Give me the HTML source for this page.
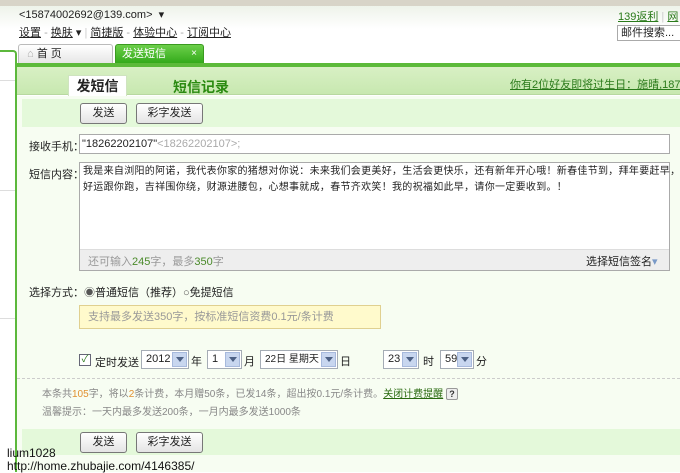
<!DOCTYPE html>
<html><head><meta charset="utf-8"><style>
*{margin:0;padding:0;box-sizing:border-box}
body{width:680px;height:472px;overflow:hidden;position:relative;background:#fff;font-family:"Liberation Sans","Noto Sans CJK SC",sans-serif;font-size:11px;color:#222}
.a{position:absolute;white-space:nowrap}
.btn{position:absolute;height:21px;border:1px solid #777;border-radius:3px;background:linear-gradient(#fff,#e4e4e4);text-align:center;line-height:19px;font-size:11px}
.sel{position:absolute;height:19px;border:1px solid #a5acb5;background:#fff;font-size:11px;line-height:17px;padding-left:4px;overflow:hidden}
.sel i{position:absolute;right:1px;top:1px;width:15px;height:15px;background:#c8d6ef;border:1px solid #a7b9dc}
.sel i:after{content:"";position:absolute;left:3px;top:4px;border:4px solid transparent;border-top:5px solid #4d6185;border-bottom:0}
.lb{position:absolute;font-size:11px}
</style></head><body>
<div class="a" style="left:0;top:0;width:680px;height:6px;background:#d8d4c8"></div>
<div class="a" style="left:0;top:6px;width:680px;height:58px;background:linear-gradient(#eef3ea,#fff 40%)"></div>
<div class="a" style="left:19px;top:8px">&lt;15874002692@139.com&gt; &nbsp;▾</div>
<div class="a" style="left:19px;top:24px"><u>设置</u> <span style="color:#aaa">-</span> <u>换肤</u> ▾ <span style="color:#ccc">|</span> <u>简捷版</u> <span style="color:#aaa">-</span> <u>体验中心</u> <span style="color:#aaa">-</span> <u>订阅中心</u></div>
<div class="a" style="left:618px;top:8px;width:62px;overflow:hidden;color:#2a7a1a"><u>139返利</u> <span style="color:#ccc">|</span> <u>网</u></div>
<div class="a" style="left:617px;top:25px;width:63px;height:16px;border:1px solid #aaa;border-right:0;background:#fff;font-size:11px;line-height:14px;padding-left:3px;overflow:hidden">邮件搜索...</div>
<div class="a" style="left:18px;top:44px;width:95px;height:20px;border:1px solid #bbb;border-bottom:0;border-radius:3px 3px 0 0;background:linear-gradient(#fff,#e5e5e5);padding-left:8px;line-height:18px"><span style="color:#aaa">⌂</span> 首 页</div>
<div class="a" style="left:115px;top:44px;width:89px;height:20px;border:1px solid #3a9a20;border-bottom:0;border-radius:3px 3px 0 0;background:linear-gradient(#6ccf4a,#30a818);color:#fff;padding-left:6px;line-height:18px">发送短信<span style="position:absolute;right:6px;font-size:10px">×</span></div>
<div class="a" style="left:0;top:50px;width:17px;height:422px;border-top:2px solid #5cb83c;border-right:2px solid #5cb83c;border-radius:0 4px 0 0;background:#fff"></div>
<div class="a" style="left:0;top:80px;width:15px;height:1px;background:#ddd"></div>
<div class="a" style="left:0;top:190px;width:15px;height:1px;background:#ddd"></div>
<div class="a" style="left:0;top:318px;width:15px;height:1px;background:#ddd"></div>
<div class="a" style="left:17px;top:63px;width:663px;height:4px;background:#5cba3a"></div>
<div class="a" style="left:17px;top:67px;width:663px;height:28px;background:linear-gradient(#d8f0c4,#c8e8b0);border-bottom:1px solid #b8d8a0"></div>
<div class="a" style="left:68px;top:75px;width:59px;height:21px;background:#fff;border:1px solid #cfe3c0;border-bottom:0;text-align:center;font-size:14px;font-weight:bold;line-height:20px">发短信</div>
<div class="a" style="left:173px;top:77px;font-size:14px;font-weight:bold;color:#2a8a10">短信记录</div>
<div class="a" style="left:510px;top:76px;width:170px;overflow:hidden;color:#2a7a1a;text-decoration:underline">你有2位好友即将过生日：施晴,18702</div>
<div class="a" style="left:17px;top:96px;width:663px;height:376px;background:#f7fdf2"></div>
<div class="a" style="left:22px;top:99px;width:658px;height:28px;background:#e4f9da"></div>
<div class="btn" style="left:80px;top:103px;width:47px">发送</div>
<div class="btn" style="left:136px;top:103px;width:67px">彩字发送</div>
<div class="lb" style="left:29px;top:138px">接收手机：</div>
<div class="a" style="left:79px;top:134px;width:591px;height:20px;border:1px solid #aaa;background:#fff;font-size:11px;line-height:18px;padding-left:2px">"18262202107"<span style="color:#aaa">&lt;18262202107&gt;;</span></div>
<div class="lb" style="left:29px;top:166px">短信内容：</div>
<div class="a" style="left:79px;top:162px;width:591px;height:109px;border:1px solid #aaa;background:#fff"></div>
<div class="a" style="left:83px;top:164px;font-size:10px;line-height:16px;letter-spacing:0.3px">我是来自浏阳的阿诺，我代表你家的猪想对你说：未来我们会更美好，生活会更快乐，还有新年开心哦！新春佳节到，拜年要赶早，<br>好运跟你跑，吉祥围你绕，财源进腰包，心想事就成，春节齐欢笑！我的祝福如此早，请你一定要收到。！</div>
<div class="a" style="left:80px;top:249px;width:589px;height:21px;background:#eee;border-top:1px solid #ddd"></div>
<div class="a" style="left:88px;top:253px;font-size:11px;color:#999">还可输入<span style="color:#4a8a2a">245</span>字，最多<span style="color:#4a8a2a">350</span>字</div>
<div class="a" style="left:586px;top:253px;font-size:11px">选择短信签名<span style="color:#7a9ac8">▾</span></div>
<div class="lb" style="left:29px;top:284px">选择方式：<span style="color:#555">◉</span>普通短信（推荐）<span style="color:#555">○</span>免提短信</div>
<div class="a" style="left:79px;top:305px;width:302px;height:24px;background:#fffacc;border:1px solid #e0d090;color:#999;font-size:11px;line-height:22px;padding-left:8px">支持最多发送350字，按标准短信资费0.1元/条计费</div>
<div class="a" style="left:79px;top:354px;width:12px;height:12px;border:1px solid #667;background:#fff;font-size:10px;line-height:10px;color:#2a7a1a;text-align:center">✓</div>
<div class="lb" style="left:95px;top:354px">定时发送</div>
<div class="sel" style="left:141px;top:350px;width:48px">2012<i></i></div><div class="lb" style="left:191px;top:353px">年</div>
<div class="sel" style="left:207px;top:350px;width:35px">1<i></i></div><div class="lb" style="left:244px;top:353px">月</div>
<div class="sel" style="left:260px;top:350px;width:78px;font-size:10px">22日 星期天<i></i></div><div class="lb" style="left:340px;top:353px">日</div>
<div class="sel" style="left:383px;top:350px;width:36px">23<i></i></div><div class="lb" style="left:423px;top:353px">时</div>
<div class="sel" style="left:440px;top:350px;width:34px">59<i></i></div><div class="lb" style="left:476px;top:353px">分</div>
<div class="a" style="left:17px;top:378px;width:663px;border-top:1px dashed #ccc"></div>
<div class="a" style="left:42px;top:385px;font-size:10px;color:#888">本条共<span style="color:#e09030">105</span>字，将以<span style="color:#e09030">2</span>条计费，本月赠50条，已发14条，超出按0.1元/条计费。<u style="color:#2a6a10">关闭计费提醒</u> <span style="display:inline-block;width:12px;height:12px;border:1px solid #999;border-radius:2px;background:#eee;color:#333;font-size:9px;line-height:10px;text-align:center;font-weight:bold">?</span></div>
<div class="a" style="left:42px;top:403px;font-size:10px;color:#888">温馨提示：一天内最多发送200条，一月内最多发送1000条</div>
<div class="a" style="left:22px;top:429px;width:658px;height:26px;background:#e4f9da"></div>
<div class="btn" style="left:80px;top:432px;width:47px">发送</div>
<div class="btn" style="left:136px;top:432px;width:67px">彩字发送</div>
<div class="a" style="left:7px;top:446px;font-size:12px;color:#111">lium1028</div>
<div class="a" style="left:7px;top:459px;font-size:12px;color:#111">http://home.zhubajie.com/4146385/</div>
</body></html>
